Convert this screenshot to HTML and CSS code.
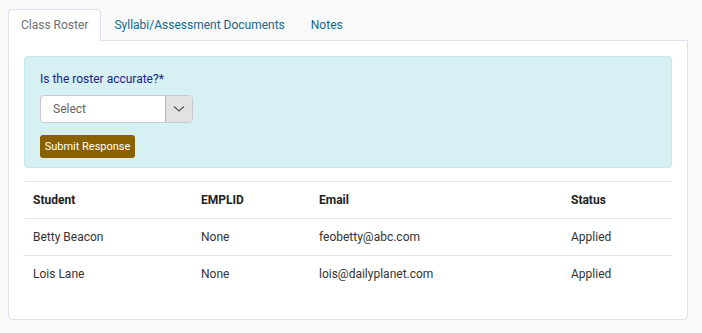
FILE: index.html
```html
<!DOCTYPE html>
<html lang="en">
<head>
    <meta charset="UTF-8">
    <meta name="viewport" content="width=device-width, initial-scale=1.0">
    <title>Class Roster</title>
    <link rel="stylesheet" href="styles.css">
</head>
<body>

    <!-- Tabs -->
    <ul class="tabs">
        <li class="tab active">Class Roster</li>
        <li class="tab">Syllabi/Assessment Documents</li>
        <li class="tab">Notes</li>
    </ul>

    <div class="panel">
        <!-- Roster confirmation -->
        <div class="alert">
            <label for="accurate" class="question">Is the roster accurate?*</label>
            <div class="select-wrap">
                <div class="select-box">Select</div>
                <div class="select-arrow">
                    <svg width="12" height="8" viewBox="0 0 12 8"><path d="M1 1.5 L6 6 L11 1.5" fill="none" stroke="#555" stroke-width="1.2"/></svg>
                </div>
            </div>
            <button class="submit-btn">Submit Response</button>
        </div>

        <!-- Students -->
        <table class="roster">
            <thead>
                <tr>
                    <th class="col-student">Student</th>
                    <th class="col-emplid">EMPLID</th>
                    <th class="col-email">Email</th>
                    <th>Status</th>
                </tr>
            </thead>
            <tbody>
                <tr>
                    <td>Betty Beacon</td>
                    <td>None</td>
                    <td>feobetty@abc.com</td>
                    <td>Applied</td>
                </tr>
                <tr>
                    <td>Lois Lane</td>
                    <td>None</td>
                    <td>lois@dailyplanet.com</td>
                    <td>Applied</td>
                </tr>
            </tbody>
        </table>
    </div>

</body>
</html>
```

FILE: styles.css
```css
body {
    font-family: Roboto, 'Liberation Sans', sans-serif;
    background-color: #f9f9fa;
    margin: 0;
    padding: 9px 14px 0 8px;
    color: #333;
    font-size: 12px;
}

.tabs {
    list-style: none;
    margin: 0;
    padding: 0;
    display: flex;
}

.tab {
    padding: 0 12px;
    height: 31px;
    line-height: 30px;
    color: #0f6a8e;
    border: 1px solid transparent;
    border-bottom: none;
}

.tab.active {
    color: #6b7078;
    background-color: #fff;
    border-color: #dfdff0;
    border-radius: 4px 4px 0 0;
    margin-bottom: -1px;
    position: relative;
}

.panel {
    background-color: #fff;
    border: 1px solid #dfdff0;
    border-radius: 0 0 5px 5px;
    padding: 15px 15px 27px 15px;
    margin-top: -1px;
}

.alert {
    background-color: #d7f0f4;
    border: 1px solid #c4e9ef;
    border-radius: 4px;
    padding: 15px 15px 9px 15px;
    height: 86px;
}

.question {
    display: block;
    color: #1b1f8c;
    margin-bottom: 9px;
}

.select-wrap {
    display: flex;
    width: 153px;
    height: 28px;
    border: 1px solid #c9c9d6;
    border-radius: 4px;
    box-sizing: border-box;
    background-color: #fff;
    overflow: hidden;
}

.select-box {
    flex: 1;
    padding-left: 12px;
    line-height: 26px;
    color: #666;
}

.select-arrow {
    width: 26px;
    background-color: #e2e2e2;
    border-left: 1px solid #b5b5b5;
    display: flex;
    align-items: center;
    justify-content: center;
}

.submit-btn {
    display: block;
    margin-top: 12px;
    background-color: #8a6100;
    color: #fff;
    font-family: Roboto, 'Liberation Sans', sans-serif;
    font-size: 11px;
    border: none;
    border-radius: 3px;
    height: 23px;
    width: 95px;
    padding: 0;
    cursor: pointer;
}

.roster {
    width: 100%;
    border-collapse: collapse;
    margin-top: 13px;
    border-top: 1px solid #e3e3ef;
}

.roster th {
    text-align: left;
    font-weight: bold;
    color: #222;
    height: 36px;
    padding: 0 9px;
    border-bottom: 1px solid #e3e3ef;
}

.roster td {
    height: 36px;
    padding: 0 9px;
    color: #333;
}

.roster tbody tr:first-child td {
    border-bottom: 1px solid #e3e3ef;
}

.col-student {
    width: 150px;
}

.col-emplid {
    width: 100px;
}

.col-email {
    width: 234px;
}
```
